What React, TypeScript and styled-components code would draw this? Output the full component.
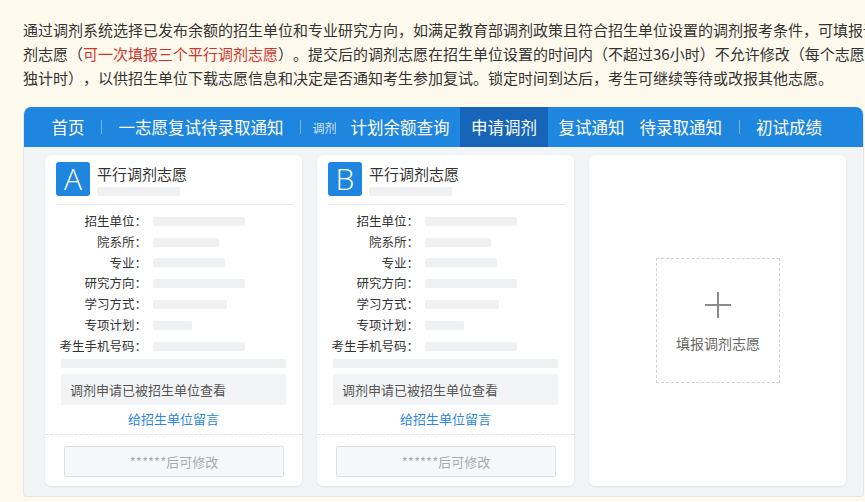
import React from "react";
import styled, { createGlobalStyle } from "styled-components";

const GlobalStyle = createGlobalStyle`
    html, body {
        margin: 0;
        padding: 0;
        overflow: hidden;
        background: #fdf9ec;
        font-family: "Noto Sans CJK SC", "Noto Sans", sans-serif;
        color: #333;
        text-spacing-trim: space-all;
    }
`;

interface Field {
    label: string;
    width: number;
}

const FIELDS: Field[] = [
    { label: "招生单位：", width: 92 },
    { label: "院系所：", width: 66 },
    { label: "专业：", width: 72 },
    { label: "研究方向：", width: 92 },
    { label: "学习方式：", width: 74 },
    { label: "专项计划：", width: 39 },
    { label: "考生手机号码：", width: 92 },
];

const VolunteerCard: React.FC<{ letter: string }> = ({ letter }) => (
    <Card>
        <CardHeader>
            <Badge>{letter}</Badge>
            <TitleBlock>
                <Title>平行调剂志愿</Title>
                <Skeleton $w={83} />
            </TitleBlock>
        </CardHeader>
        <FieldGrid>
            {FIELDS.map((f) => (
                <React.Fragment key={f.label}>
                    <FieldLabel>{f.label}</FieldLabel>
                    <FieldValue>
                        <Skeleton $w={f.width} />
                    </FieldValue>
                </React.Fragment>
            ))}
        </FieldGrid>
        <WideBar />
        <Notice>调剂申请已被招生单位查看</Notice>
        <MessageLink>给招生单位留言</MessageLink>
        <CardFooter>
            <DisabledButton disabled>******后可修改</DisabledButton>
        </CardFooter>
    </Card>
);

const App: React.FC = () => (
    <>
        <GlobalStyle />
        <Intro>
            <Line>
                通过调剂系统选择已发布余额的招生单位和专业研究方向，如满足教育部调剂政策且符合招生单位设置的调剂报考条件，可填报调
            </Line>
            <Line>
                剂志愿（<Red>可一次填报三个平行调剂志愿</Red>）。提交后的调剂志愿在招生单位设置的时间内（不超过36小时）不允许修改（每个志愿单
            </Line>
            <Line>
                独计时），以供招生单位下载志愿信息和决定是否通知考生参加复试。锁定时间到达后，考生可继续等待或改报其他志愿。
            </Line>
        </Intro>
        <Panel>
            <Nav>
                <NavItem>首页</NavItem>
                <NavSep />
                <NavItem>一志愿复试待录取通知</NavItem>
                <NavSep />
                <NavItem $tight>
                    <NavTag>调剂</NavTag>计划余额查询
                </NavItem>
                <NavItem $active>申请调剂</NavItem>
                <NavItem>复试通知</NavItem>
                <NavItem>待录取通知</NavItem>
                <NavSep />
                <NavItem>初试成绩</NavItem>
            </Nav>
            <Body>
                <VolunteerCard letter="A" />
                <VolunteerCard letter="B" />
                <Card>
                    <AddArea>
                        <AddBox>
                            <svg width="28" height="28" viewBox="0 0 28 28">
                                <path d="M14 1v26M1 14h26" stroke="#8a8a8a" strokeWidth="2" fill="none" />
                            </svg>
                            <AddText>填报调剂志愿</AddText>
                        </AddBox>
                    </AddArea>
                </Card>
            </Body>
        </Panel>
    </>
);

export default App;

/* ~~~~~~ -- styling -- ~~~~~~ */

const Intro = styled.div`
    padding: 18px 0 0 23px;
    font-size: 15px;
    line-height: 24px;
    color: #333;
`;

const Line = styled.div`
    white-space: nowrap;
`;

const Red = styled.span`
    color: #d0342c;
`;

const Panel = styled.div`
    margin: 17px 0 0 23px;
    width: 841px;
    border-radius: 8px 8px 4px 4px;
    overflow: hidden;
    background: #f3f4f6;
    border: 1px solid #e4e6ea;
    border-top: none;
    box-sizing: border-box;
`;

const Nav = styled.div`
    display: flex;
    align-items: stretch;
    height: 40px;
    padding-left: 20px;
    background: #1f86df;
`;

const NavItem = styled.div<{ $active?: boolean; $tight?: boolean }>`
    display: flex;
    align-items: center;
    padding: 0 ${(p) => (p.$active ? "11px" : "7.5px")};
    padding-left: ${(p) => (p.$tight ? "2.5px" : p.$active ? "11px" : "7.5px")};
    margin: ${(p) => (p.$active ? "0 3px" : "0")};
    font-size: 16.5px;
    color: #fff;
    white-space: nowrap;
    background: ${(p) => (p.$active ? "#1765b9" : "transparent")};
`;

const NavTag = styled.span`
    font-size: 12px;
    margin-right: 14px;
    color: rgba(255, 255, 255, 0.8);
`;

const NavSep = styled.div`
    align-self: center;
    width: 1px;
    height: 14px;
    margin: 0 9px;
    background: rgba(255, 255, 255, 0.4);
`;

const Body = styled.div`
    display: grid;
    grid-template-columns: repeat(3, 257px);
    gap: 15px;
    padding: 8px 0 10px 21px;
`;

const Card = styled.div`
    display: flex;
    flex-direction: column;
    background: #fff;
    border-radius: 6px;
    box-shadow: 0 1px 3px rgba(0, 0, 0, 0.08);
`;

const CardHeader = styled.div`
    display: flex;
    gap: 7px;
    margin: 0 9px 0 11px;
    padding: 7px 0 8px;
    border-bottom: 1px solid #e8e9eb;
`;

const Badge = styled.div`
    width: 34px;
    height: 34px;
    border-radius: 3px;
    background: #1f86df;
    color: #fff;
    display: flex;
    align-items: center;
    justify-content: center;
    font-family: "Open Sans", "Liberation Sans", sans-serif;
    font-weight: 300;
    font-size: 30px;
    line-height: 1;
`;

const TitleBlock = styled.div`
    display: flex;
    flex-direction: column;
    padding-top: 2px;
`;

const Title = styled.div`
    font-size: 15px;
    line-height: 20px;
    color: #333;
`;

const Skeleton = styled.div<{ $w: number }>`
    width: ${(p) => p.$w}px;
    height: 9px;
    border-radius: 2px;
    background: #eef0f2;
    margin-top: 3px;
`;

const FieldGrid = styled.div`
    display: grid;
    grid-template-columns: 91px 1fr;
    column-gap: 6px;
    grid-auto-rows: 20.8px;
    margin-top: 6px;
    padding-left: 11px;
`;

const FieldLabel = styled.div`
    text-align: right;
    font-size: 12.5px;
    line-height: 20.8px;
    color: #333;
    white-space: nowrap;
`;

const FieldValue = styled.div`
    display: flex;
    align-items: center;

    & > div {
        margin-top: 0;
    }
`;

const WideBar = styled.div`
    height: 9px;
    margin: 2px 16px 0;
    border-radius: 2px;
    background: #eef0f2;
`;

const Notice = styled.div`
    margin: 6px 16px 0;
    height: 31px;
    line-height: 31px;
    padding-left: 9px;
    background: #f2f3f5;
    font-size: 13px;
    color: #555;
`;

const MessageLink = styled.div`
    margin-top: 4px;
    text-align: center;
    font-size: 13px;
    line-height: 20px;
    color: #2b86e3;
`;

const CardFooter = styled.div`
    margin-top: 5px;
    padding: 11px 18px 9px 19px;
    border-top: 1px dashed #dfe1e4;
`;

const DisabledButton = styled.button`
    display: block;
    width: 100%;
    height: 31px;
    border: 1px solid #dcdfe3;
    border-radius: 2px;
    background: #f6f7f9;
    font-family: "Noto Sans CJK SC", sans-serif;
    font-size: 13px;
    color: #aaa;
`;

const AddArea = styled.div`
    flex: 1;
    display: flex;
    align-items: center;
    justify-content: center;
`;

const AddBox = styled.div`
    width: 124px;
    height: 125px;
    box-sizing: border-box;
    border: 1px dashed #cfd1d4;
    display: flex;
    flex-direction: column;
    align-items: center;
    padding-top: 32px;
    margin-left: 1px;
`;

const AddText = styled.div`
    margin-top: 14px;
    font-size: 14px;
    color: #666;
`;
